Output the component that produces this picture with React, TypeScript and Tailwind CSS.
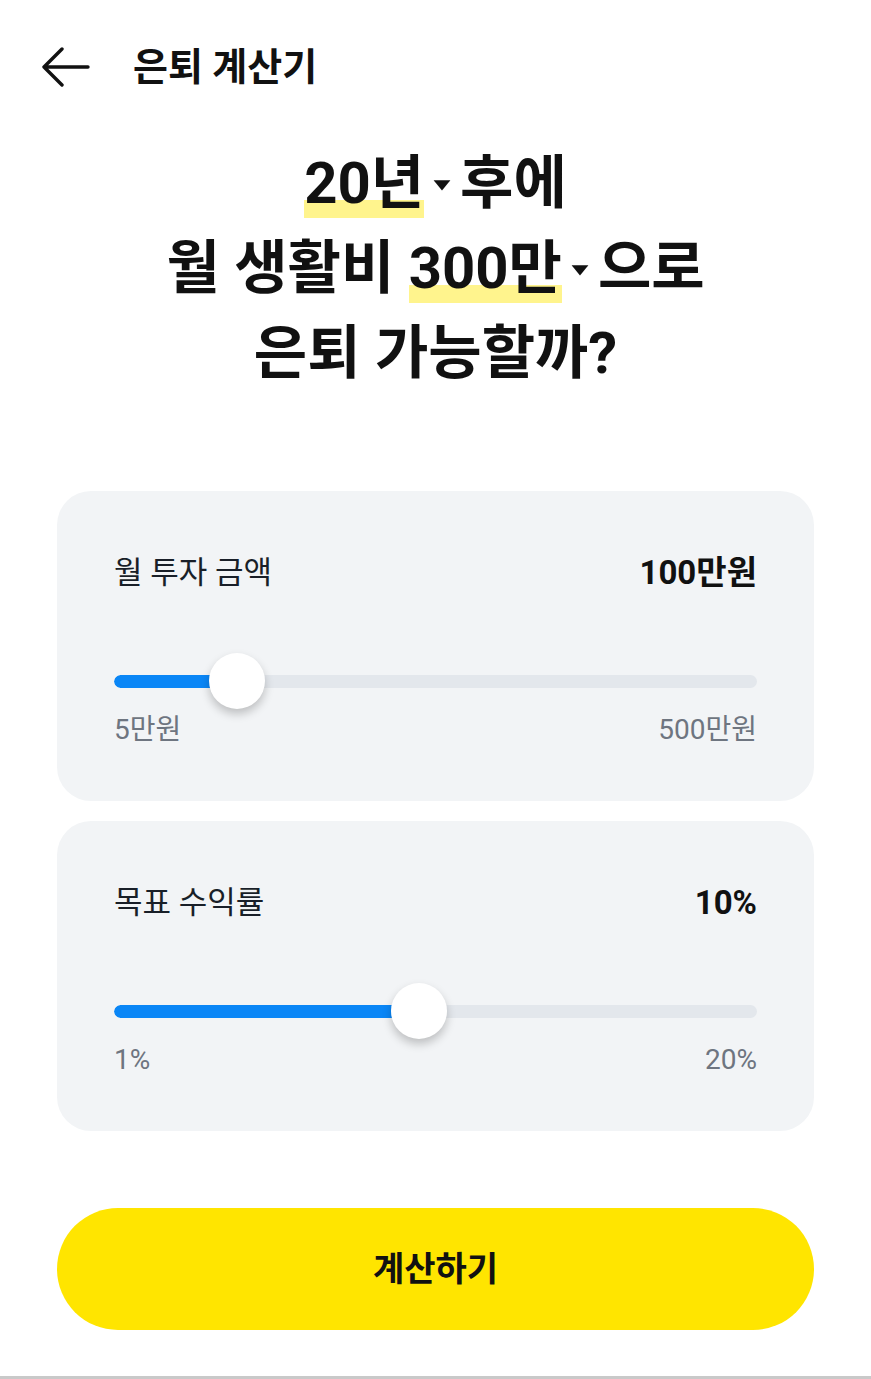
import React from 'react';

const font = "font-['Roboto','Noto_Sans_CJK_KR',sans-serif]";

function Caret() {
  return (
    <svg viewBox="0 0 16 10" className="inline-block w-[20px] h-[12px] mx-[8px] align-middle relative -top-[3px]">
      <path d="M1 1h14L8 9.5z" fill="#111" />
    </svg>
  );
}

function Mark({ children }: { children: React.ReactNode }) {
  return (
    <span className="inline-block bg-[linear-gradient(to_bottom,transparent_70%,#fff48d_70%,#fff48d_91%,transparent_91%)]">
      {children}
    </span>
  );
}

function SliderCard({ label, value, min, max, pct }: { label: string; value: string; min: string; max: string; pct: number }) {
  return (
    <div className="rounded-[34px] bg-[#f2f4f6] px-[57px] pt-[64px] pb-[55px]">
      <div className="flex items-center justify-between leading-[36px]">
        <span className="text-[31px] text-[#191f28]">{label}</span>
        <span className="text-[33px] font-bold text-[#111]">{value}</span>
      </div>
      <div className="relative mt-[62px] h-[56px] flex items-center">
        <div className="h-[13px] w-full rounded-full bg-[#e3e7ec] overflow-hidden">
          <div className="h-full rounded-full bg-[#0a86f6]" style={{ width: `${pct}%` }} />
        </div>
        <div
          className="absolute top-0 h-[56px] w-[56px] -ml-[28px] rounded-full bg-white shadow-[0_5px_10px_rgba(0,0,0,0.22)]"
          style={{ left: `${pct}%` }}
        />
      </div>
      <div className="mt-[5px] flex justify-between leading-[32px] text-[28px] text-[#6e7580]">
        <span>{min}</span>
        <span>{max}</span>
      </div>
    </div>
  );
}

export default function App() {
  return (
    <div className={`${font} min-h-[1379px] bg-white text-[#111] flex flex-col border-b-[3px] border-[#c9c9c9]`}>
      <header className="h-[134px] flex items-center pl-[42px] gap-[43px]">
        <svg viewBox="0 0 48 40" className="w-[48px] h-[40px]" fill="none" stroke="#111" strokeWidth="3.4" strokeLinecap="round" strokeLinejoin="round">
          <path d="M2 20h44M20 2L2 20l18 18" />
        </svg>
        <h1 className="text-[38px] font-bold">은퇴 계산기</h1>
      </header>

      <div className="mt-[7px] text-center text-[58px] font-bold leading-[85px]">
        <div>
          <Mark>20년</Mark>
          <Caret />
          후에
        </div>
        <div>
          월 생활비 <Mark>300만</Mark>
          <Caret />
          으로
        </div>
        <div>은퇴 가능할까?</div>
      </div>

      <div className="mx-[57px] mt-[95px] flex flex-col gap-[20px]">
        <SliderCard label="월 투자 금액" value="100만원" min="5만원" max="500만원" pct={19.2} />
        <SliderCard label="목표 수익률" value="10%" min="1%" max="20%" pct={47.4} />
      </div>

      <button className="mx-[57px] mt-[77px] h-[122px] rounded-full bg-[#ffe500] text-[34px] font-bold text-[#111]">
        계산하기
      </button>
    </div>
  );
}
